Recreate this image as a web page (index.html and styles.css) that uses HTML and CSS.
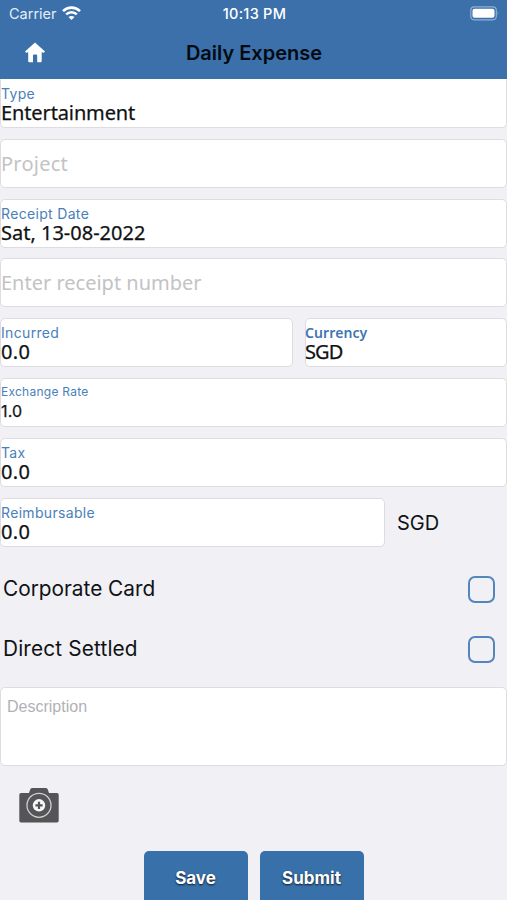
FILE: index.html
```html
<!DOCTYPE html>
<html lang="en">
<head>
<meta charset="utf-8">
<title>Daily Expense</title>
<link rel="stylesheet" href="styles.css">
</head>
<body>
<div class="screen">
  <header class="header">
    <div class="status">
      <div class="carrier"><span>Carrier</span>
        <svg width="19" height="15" viewBox="0 0 19 15" fill="none" stroke="#fff" stroke-width="2.6"><path d="M1 5.100C5.700.5 13.300.5 18 5.100M4.200 8.400c3-2.900 7.600-2.900 10.600 0"/><path d="M9.500 14 6.500 11c1.700-1.500 4.300-1.500 6 0z" fill="#fff" stroke="none"/></svg>
      </div>
      <time class="clock">10:13 PM</time>
      <svg class="battery" width="31" height="15" viewBox="0 0 31 15"><rect x="1.800" y=".8" width="25.500" height="13" rx="3.500" fill="none" stroke="#8fb0d3" stroke-width="1.200"/><rect x="3.500" y="2.800" width="22" height="9" rx="2" fill="#fff"/><path d="M28.600 5q1.800 2.300 0 4.600z" fill="#8fb0d3"/></svg>
    </div>
    <div class="nav">
      <svg class="home" width="20" height="21" viewBox="0 0 20 21"><path d="M10 .5 20 9.500 18.900 10.800 16.700 10.200V19q0 1.200-1.200 1.200H12.200V13.600q0-1-1-1H9q-1 0-1 1v6.600H4.400q-1.200 0-1.200-1.200v-8.800l-2.100.6L0 9.500z" fill="#fff"/></svg>
      <h1 class="title">Daily Expense</h1>
      <span></span>
    </div>
  </header>
  <main class="form">
    <div class="field first"><label class="label">Type</label><span class="value entertainment">Entertainment</span></div>
    <div class="field empty"><span class="hint project">Project</span></div>
    <div class="field"><label class="label">Receipt Date</label><span class="value">Sat, 13-08-2022</span></div>
    <div class="field empty"><span class="hint">Enter receipt number</span></div>
    <div class="row">
      <div class="field incurred"><label class="label">Incurred</label><span class="value number">0.0</span></div>
      <div class="field currency"><label class="label strong">Currency</label><span class="value code">SGD</span></div>
    </div>
    <div class="field"><label class="label small">Exchange Rate</label><span class="value rate">1.0</span></div>
    <div class="field"><label class="label">Tax</label><span class="value number">0.0</span></div>
    <div class="row">
      <div class="field reimbursable"><label class="label">Reimbursable</label><span class="value number">0.0</span></div>
      <span class="unit">SGD</span>
    </div>
    <div class="check"><span>Corporate Card</span><span class="box"></span></div>
    <div class="check"><span class="settled">Direct Settled</span><span class="box"></span></div>
    <div class="description">Description</div>
    <svg class="camera" width="40" height="35" viewBox="0 0 40 35"><path d="M2 5h8l1.200-3.500Q11.700 0 13 0h14q1.300 0 1.800 1.500L30 5h8q1.700 0 1.700 1.700v26Q39.700 34.500 38 34.500H2Q.3 34.500.3 32.700v-26Q.3 5 2 5z" fill="#555456"/><circle cx="20" cy="17.300" r="12" fill="none" stroke="#d0d0d2" stroke-width="1.300"/><circle cx="20" cy="17.300" r="6.200" fill="#f7f7f8"/><path d="M20 13.700v7.200M16.400 17.300h7.200" stroke="#555456" stroke-width="2.200"/></svg>
  </main>
  <footer class="actions"><div class="button">Save</div><div class="button">Submit</div></footer>
</div>
</body>
</html>
```

FILE: styles.css
```css
* { box-sizing: border-box; }
body { margin: 0; font-family: Inter, sans-serif; color: #111214; }
.screen { width: 507px; height: 900px; overflow: hidden; background: #f0f0f5; }
.header { height: 79px; background: #3b70aa; }
.status { height: 27px; padding: 0 7px 0 9px; display: grid; grid-template-columns: 1fr auto 1fr; align-items: center; color: #fff; }
.carrier { display: flex; align-items: center; gap: 5px; font-size: 14.5px; color: #e4edf7; }
.clock { font-size: 14.5px; font-weight: 500; letter-spacing: .25px; }
.battery { justify-self: end; }
.nav { height: 51px; padding: 0 24px 0 25px; display: grid; grid-template-columns: 1fr auto 1fr; align-items: center; }
.title { margin: 0; font-size: 20px; font-weight: 600; line-height: 24px; color: #030a12; }
.form { display: flex; flex-direction: column; gap: 10.8px; }
.field { height: 49px; padding: 4px 0 0; background: #fff; border: 1px solid #dddde1; border-radius: 5px; display: flex; flex-direction: column; white-space: nowrap; }
.first { border-top-color: #fff; border-top-left-radius: 0; border-top-right-radius: 0; }
.label { height: 19px; font-size: 14px; line-height: 19px; letter-spacing: .33px; color: #4a7fb9; }
.strong { margin-left: -1px; font-family: "Noto Sans", sans-serif; font-weight: 600; letter-spacing: .1px; color: #3e75b2; }
.small { font-size: 12px; height: 18px; line-height: 18px; letter-spacing: .25px; }
.value { font-family: "Noto Sans", sans-serif; font-size: 20px; line-height: 20px; -webkit-text-stroke: .25px currentColor; }
.entertainment { letter-spacing: -.12px; }
.number { letter-spacing: .4px; }
.code { margin-left: -1px; letter-spacing: -.9px; }
.rate { font-family: Inter, sans-serif; font-size: 16px; letter-spacing: .2px; }
.empty { justify-content: center; padding: 1px 0 0; }
.hint { font-family: "Noto Sans", sans-serif; font-size: 20px; line-height: 24px; color: #c3c3c5; }
.project { letter-spacing: .25px; }
.row { display: flex; gap: 12px; align-items: center; }
.incurred { width: 293px; }
.currency { width: 202px; }
.reimbursable { width: 385px; }
.unit { font-size: 20px; padding-top: 2px; }
.check { height: 49px; padding: 0 12px 0 3px; position: relative; top: 1px; display: flex; justify-content: space-between; align-items: center; font-size: 20.8px; }
.check { position: static; padding-top: 15px; }
.check > span:first-child { margin-top: -2px; }
.settled { letter-spacing: .15px; }
.box { width: 27px; height: 27px; flex: none; border: 2px solid #5585bd; border-radius: 7px; }
.description { height: 79px; margin-top: 10px; padding: 10px 6px; background: #fff; border: 1px solid #dddde1; border-radius: 5px; font-family: "Liberation Sans", sans-serif; font-size: 16px; line-height: 18px; color: #b1b1b4; }
.camera { margin: 11px 0 0 19px; }
.actions { margin-top: 28px; display: flex; justify-content: center; gap: 12px; }
.button { width: 104px; height: 60px; padding-top: 14px; border-radius: 5px 5px 0 0; background: #3870aa; color: #fff; font-size: 17px; font-weight: 700; line-height: 26px; text-align: center; text-shadow: 0 1px 2px #101820; }
```
